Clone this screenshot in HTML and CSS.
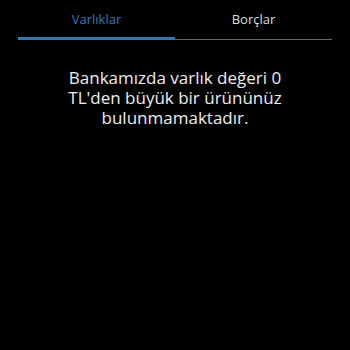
FILE: index.html
```html
<!DOCTYPE html>
<html lang="tr">
<head>
<meta charset="UTF-8">
<title>Varlıklar</title>
<link rel="stylesheet" href="styles.css">
</head>
<body>
<div class="tabs">
    <div class="tab active">Varlıklar</div>
    <div class="tab">Borçlar</div>
</div>
<p class="empty">Bankamızda varlık değeri 0 TL'den büyük bir ürününüz bulunmamaktadır.</p>
</body>
</html>
```

FILE: styles.css
```css
body { margin: 0; background: #000; color: #eee; font-family: "Open Sans", "DejaVu Sans", sans-serif; }
.tabs { display: flex; margin: 0 18px; border-bottom: 1px solid #666; }
.tab { flex: 1; text-align: center; font-size: 13px; padding: 10px 0 9px; color: #ddd; border-bottom: 3px solid transparent; margin-bottom: -1px; }
.tab.active { color: #2f7bb5; border-bottom-color: #2f7bb5; }
.empty { margin: 28px 60px 0; text-align: center; font-size: 17px; line-height: 20px; }
```
